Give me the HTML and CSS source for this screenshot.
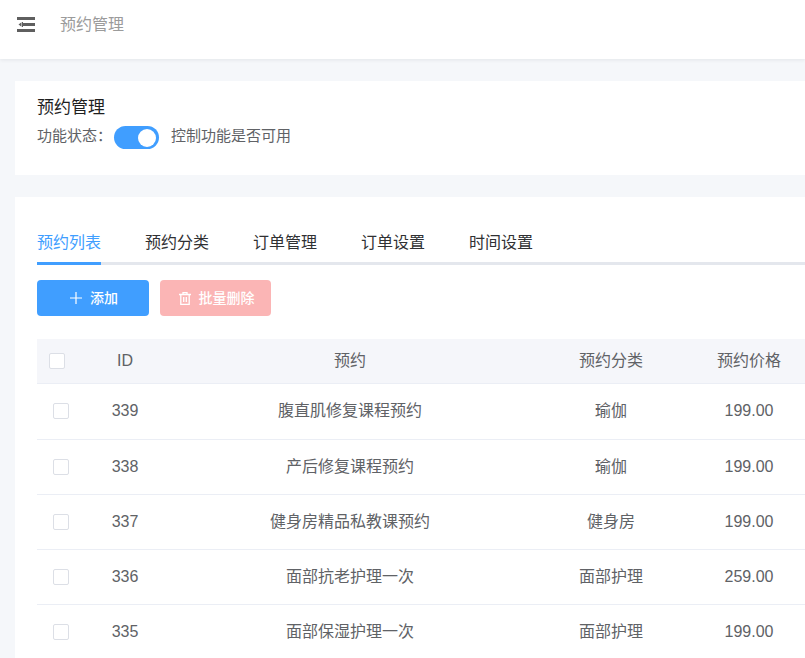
FILE: index.html
```html
<!DOCTYPE html>
<html lang="zh">
<head>
<meta charset="utf-8">
<title>预约管理</title>
<link rel="stylesheet" href="styles.css">
</head>
<body>
<header class="topbar">
  <svg class="menu-icon" width="18" height="15" viewBox="0 0 18 15"><path d="M0 0h18v3H0zM6 6h12v3H6zM0 12h18v3H0zM1.500 7.500L4.500 5.300v4.400z" fill="#5f5f5f"/><path d="M5 5h1v5H5z" fill="#5f5f5f"/></svg>
  <span class="crumb">预约管理</span>
</header>
<main class="page">
  <section class="card status-card">
    <h1 class="title">预约管理</h1>
    <div class="status-row">
      <span class="status-label">功能状态：</span>
      <span class="switch"><span class="knob"></span></span>
      <span>控制功能是否可用</span>
    </div>
  </section>
  <section class="card list-card">
    <nav class="tabs">
      <a class="tab active">预约列表</a>
      <a class="tab">预约分类</a>
      <a class="tab">订单管理</a>
      <a class="tab">订单设置</a>
      <a class="tab">时间设置</a>
    </nav>
    <div class="actions">
      <button class="btn btn-add">
        <svg width="12" height="12" viewBox="0 0 12 12"><path d="M5.400 0h1.200v5.400H12v1.200H6.600V12H5.400V6.600H0V5.400h5.400z" fill="#fff"/></svg>
        <span>添加</span>
      </button>
      <button class="btn btn-del">
        <svg width="12" height="13" viewBox="0 0 12 13" fill="none" stroke="#fff" stroke-width="1.300"><path d="M0 2.500h12M4 2.500V.7h4v1.800M1.800 2.500v9.800h8.400V2.500M4.700 5v5M7.300 5v5"/></svg>
        <span>批量删除</span>
      </button>
    </div>
    <table class="grid">
      <colgroup>
        <col class="c-check"><col class="c-id"><col class="c-name"><col class="c-cat"><col class="c-price">
      </colgroup>
      <thead>
        <tr><th class="check-cell"><span class="check head-check"></span></th><th>ID</th><th>预约</th><th>预约分类</th><th>预约价格</th></tr>
      </thead>
      <tbody>
        <tr><td class="check-cell"><span class="check"></span></td><td>339</td><td>腹直肌修复课程预约</td><td>瑜伽</td><td>199.00</td></tr>
        <tr><td class="check-cell"><span class="check"></span></td><td>338</td><td>产后修复课程预约</td><td>瑜伽</td><td>199.00</td></tr>
        <tr><td class="check-cell"><span class="check"></span></td><td>337</td><td>健身房精品私教课预约</td><td>健身房</td><td>199.00</td></tr>
        <tr><td class="check-cell"><span class="check"></span></td><td>336</td><td>面部抗老护理一次</td><td>面部护理</td><td>259.00</td></tr>
        <tr><td class="check-cell"><span class="check"></span></td><td>335</td><td>面部保湿护理一次</td><td>面部护理</td><td>199.00</td></tr>
      </tbody>
    </table>
  </section>
</main>
</body>
</html>
```
FILE: styles.css
```css
* { box-sizing: border-box; }
html, body { margin: 0; height: 100%; overflow: hidden; }
body {
  background: #f5f7fa;
  font-family: "Liberation Sans", "Noto Sans CJK SC", sans-serif;
  color: #606266;
  width: 805px;
}
.topbar {
  height: 59px;
  background: #fff;
  box-shadow: 0 1px 4px rgba(0, 21, 41, .08);
  display: flex;
  align-items: center;
  padding: 0 0 10px 17px;
  position: relative;
}
.menu-icon { flex: none; }
.crumb { margin-left: 25px; font-size: 16px; color: #9b9b9b; line-height: 30px; }
.page { padding: 22px 0 0 15px; }
.card { background: #fff; width: 820px; }
.status-card { height: 94px; padding: 15px 22px 0; margin-bottom: 22px; }
.title { margin: 0; font-size: 17px; font-weight: 400; color: #1f1f1f; line-height: 24px; }
.status-row { display: flex; align-items: flex-start; font-size: 15px; line-height: 19px; margin-top: 6px; }
.status-label { width: 75px; }
.switch { width: 45px; height: 23px; border-radius: 12px; background: #409eff; margin: 0 12px 0 2px; display: flex; justify-content: flex-end; align-items: center; padding-right: 3px; }
.knob { width: 18px; height: 18px; border-radius: 50%; background: #fff; }
.list-card { padding: 30px 0 0 22px; height: 470px; }
.tabs { display: flex; gap: 44px; border-bottom: 3px solid #e4e7ed; height: 38px; width: 798px; }
.tab { font-size: 16px; line-height: 30px; color: #303133; height: 38px; padding-top: 1px; }
.tab.active { color: #409eff; border-bottom: 3px solid #409eff; }
.actions { display: flex; gap: 11px; margin-top: 15px; }
.btn { height: 36px; border: 0; border-radius: 4px; color: #fff; font: inherit; font-size: 14px; font-weight: 500; line-height: 20px; display: flex; align-items: center; justify-content: center; gap: 8px; padding: 0; }
.btn-add { width: 112px; background: #409eff; padding-left: 2px; }
.btn-del { width: 111px; background: #fbb5b5; padding-left: 2px; }
.grid { border-collapse: collapse; table-layout: fixed; width: 774px; margin-top: 23px; font-size: 16px; line-height: 22px; }
.c-check { width: 48px; }
.c-id { width: 80px; }
.c-name { width: 370px; }
.c-cat { width: 152px; }
.c-price { width: 124px; }
th { height: 44px; background: #f5f6fa; font-weight: 400; border-bottom: 1px solid #ebeef5; text-align: center; padding: 0; color: #606266; }
td { height: 55px; border-bottom: 1px solid #ebeef5; text-align: center; padding: 0; }
tbody tr:first-child td { height: 56px; }
.check-cell { line-height: 0; }
.check { display: inline-block; width: 16px; height: 16px; background: #fff; border: 1px solid #dcdfe6; border-radius: 2px; vertical-align: middle; }
.head-check { position: relative; left: -4px; }
```
